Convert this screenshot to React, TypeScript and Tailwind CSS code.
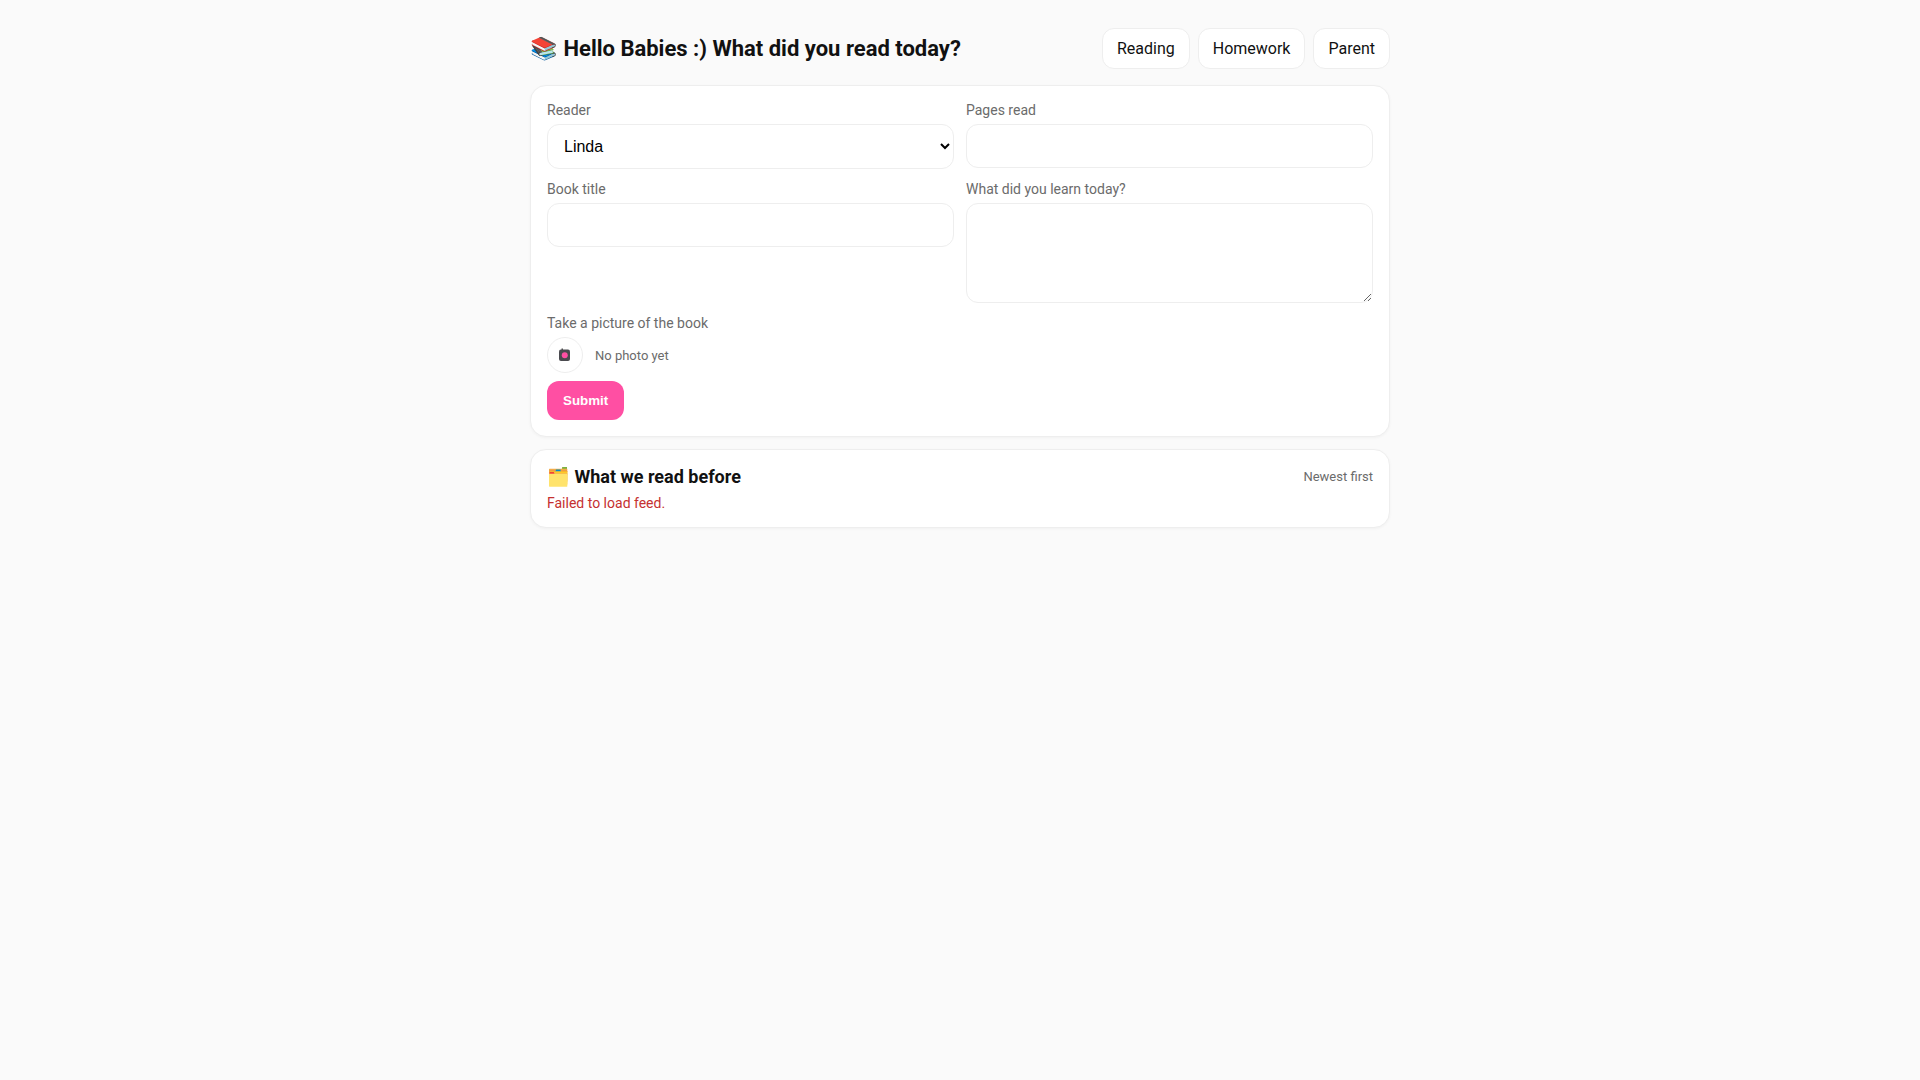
import React from 'react';

const inputClass = 'w-full h-[44px] rounded-xl border border-[#eeeeee] bg-white px-4 text-base text-black outline-none';
const labelClass = 'block h-[16px] text-sm leading-[16px] text-[#6b6b6b] mb-[6px]';

export default function App() {
    return (
        <div className="min-h-[1080px] bg-[#fafafa] font-['Roboto',sans-serif] text-[#111111]">
            <div className="mx-auto w-[860px] pt-[28px]">
                {/* Header */}
                <div className="flex items-center justify-between h-[41px] mb-[16px]">
                    <h1 className="text-[22px] font-bold leading-[28px]"><span className="mr-px">📚</span> Hello Babies :) What did you read today?</h1>
                    <div className="flex items-center gap-2">
                        <button className="h-[41px] px-[14px] rounded-xl border border-[#eeeeee] bg-white text-base">Reading</button>
                        <button className="h-[41px] px-[14px] rounded-xl border border-[#eeeeee] bg-white text-base">Homework</button>
                        <button className="h-[41px] px-[14px] rounded-xl border border-[#eeeeee] bg-white text-base">Parent</button>
                    </div>
                </div>

                {/* Form card */}
                <div className="bg-white border border-[#eeeeee] rounded-2xl p-4 shadow-[0_1px_3px_rgba(0,0,0,0.04)]">
                    <div className="grid grid-cols-2 gap-x-3 gap-y-3">
                        <div>
                            <label className={labelClass}>Reader</label>
                            <select defaultValue="Linda" className="w-full h-[45px] rounded-xl border border-[#eeeeee] bg-white px-3 text-base text-black outline-none font-['Liberation_Sans',sans-serif] appearance-auto">
                                <option>Linda</option>
                            </select>
                        </div>
                        <div>
                            <label className={labelClass}>Pages read</label>
                            <input className={inputClass} />
                        </div>
                        <div>
                            <label className={labelClass}>Book title</label>
                            <input className={inputClass} />
                        </div>
                        <div>
                            <label className={labelClass}>What did you learn today?</label>
                            <textarea className="block w-full h-[100px] rounded-xl border border-[#eeeeee] bg-white px-4 py-3 text-base text-black outline-none resize-y" />
                        </div>
                    </div>

                    <div className="mt-3">
                        <label className={labelClass}>Take a picture of the book</label>
                        <div className="flex items-center gap-3">
                            <div className="w-[36px] h-[36px] rounded-full border border-[#eeeeee] bg-white flex items-center justify-center">
                                <svg width="12" height="14" viewBox="0 0 12 14">
                                    <rect x="2.5" y="0.5" width="1.5" height="2" fill="#555555" />
                                    <rect x="0" y="1.5" width="11" height="11.5" rx="2" fill="#4a4a4f" />
                                    <circle cx="5.75" cy="7.2" r="3" fill="#ff4fa3" />
                                </svg>
                            </div>
                            <span className="pt-[2px] text-[13px] leading-[20px] text-[#6b6b6b]">No photo yet</span>
                        </div>
                    </div>

                    <button className="mt-2 block h-[39px] px-4 rounded-xl bg-[#ff4fa3] text-white text-[13.33px] font-bold font-['Liberation_Sans',sans-serif]">
                        Submit
                    </button>
                </div>

                {/* Feed card */}
                <div className="mt-3 bg-white border border-[#eeeeee] rounded-2xl px-4 pt-4 pb-[15px] shadow-[0_1px_3px_rgba(0,0,0,0.04)]">
                    <div className="flex items-center justify-between h-[21px]">
                        <h2 className="text-lg font-bold leading-[21px]"><span className="mr-px">🗂️</span> What we read before</h2>
                        <span className="text-[13px] text-[#6b6b6b]">Newest first</span>
                    </div>
                    <p className="mt-2 text-sm leading-[17px] text-[#c53030]">Failed to load feed.</p>
                </div>
            </div>
        </div>
    );
}
